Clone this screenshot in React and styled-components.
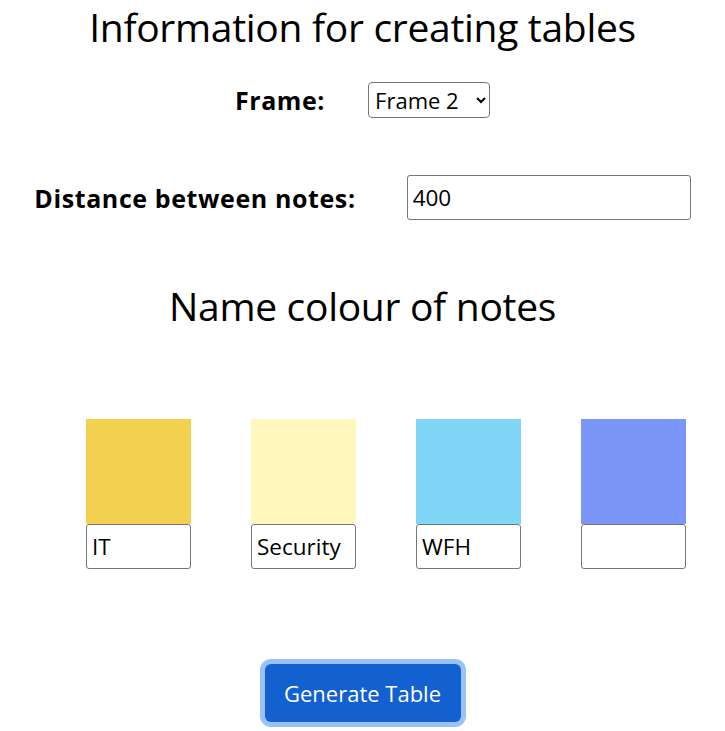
import React from 'react'
import styled, { createGlobalStyle } from 'styled-components'

const GlobalStyle = createGlobalStyle`
    body {
        margin: 0;
        background: #fff;
        font-family: "Open Sans", "Noto Sans", sans-serif;
        color: #000;
    }
`

const notes = [
    { colour: '#f3d050', name: 'IT' },
    { colour: '#fff7bb', name: 'Security' },
    { colour: '#7fd6f7', name: 'WFH' },
    { colour: '#7b96f7', name: '' },
]

const App = () => {
    return (
        <Page>
            <GlobalStyle />
            <Title>Information for creating tables</Title>
            <FieldRow gap={43} top={29}>
                <Label>Frame:</Label>
                <Select defaultValue="Frame 2">
                    <option>Frame 1</option>
                    <option>Frame 2</option>
                    <option>Frame 3</option>
                </Select>
            </FieldRow>
            <FieldRow gap={51} top={57}>
                <Label>Distance between notes:</Label>
                <TextInput defaultValue="400" />
            </FieldRow>
            <SubTitle>Name colour of notes</SubTitle>
            <Swatches>
                {notes.map((n, i) => (
                    <Note key={i}>
                        <Swatch colour={n.colour} />
                        <NoteInput defaultValue={n.name} />
                    </Note>
                ))}
            </Swatches>
            <ButtonRow>
                <GenerateButton>Generate Table</GenerateButton>
            </ButtonRow>
        </Page>
    )
}

export default App

const Page = styled.div`
    width: 725px;
    height: 731px;
    overflow: hidden;
    display: flex;
    flex-direction: column;
`
const Title = styled.h1`
    margin: 0;
    line-height: normal;
    text-align: center;
    font-size: 39px;
    font-weight: 400;
    letter-spacing: -0.3px;
`
const FieldRow = styled.div`
    display: flex;
    justify-content: center;
    align-items: center;
    height: ${p => (p.gap > 45 ? 45 : 36)}px;
    gap: ${p => p.gap}px;
    margin-top: ${p => p.top}px;
`
const Label = styled.label`
    font-size: 25px;
    font-weight: 700;
    letter-spacing: 0.6px;
`
const Select = styled.select`
    height: 36px;
    width: 122px;
    font-family: inherit;
    font-size: 22px;
    border: 1px solid #767676;
    border-radius: 4px;
    background: #fff;
    color: #000;
    padding: 0 2px;
`
const TextInput = styled.input`
    box-sizing: border-box;
    height: 45px;
    width: 284px;
    font-family: inherit;
    font-size: 22.5px;
    border: 1px solid #767676;
    border-radius: 3px;
    padding: 0 5px;
    color: #000;
`
const SubTitle = styled.h2`
    margin: 59px 0 0;
    line-height: normal;
    text-align: center;
    font-size: 39px;
    font-weight: 400;
    letter-spacing: -0.3px;
`
const Swatches = styled.div`
    display: flex;
    gap: 60px;
    padding-left: 86px;
    margin-top: 87px;
`
const Note = styled.div`
    display: flex;
    flex-direction: column;
    width: 105px;
`
const Swatch = styled.div`
    width: 105px;
    height: 105px;
    background: ${p => p.colour};
`
const NoteInput = styled.input`
    box-sizing: border-box;
    width: 105px;
    height: 45px;
    font-family: inherit;
    font-size: 22.5px;
    border: 1px solid #767676;
    border-radius: 3px;
    padding: 0 5px;
    color: #000;
`
const ButtonRow = styled.div`
    display: flex;
    justify-content: center;
    margin-top: 95px;
`
const GenerateButton = styled.button`
    width: 196px;
    height: 58px;
    border: none;
    border-radius: 6px;
    background: #1360d0;
    color: #fff;
    font-family: inherit;
    font-size: 22px;
    box-shadow: 0 0 0 5px #9bc1f9;
    cursor: pointer;
`
